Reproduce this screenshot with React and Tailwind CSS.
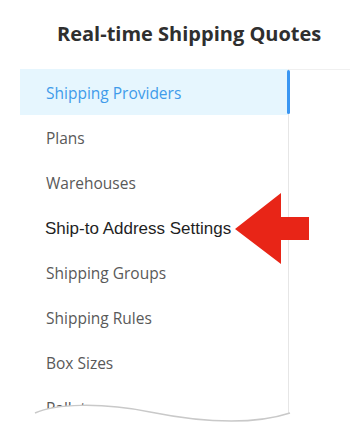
const items = [
  "Shipping Providers",
  "Plans",
  "Warehouses",
  "Ship-to Address Settings",
  "Shipping Groups",
  "Shipping Rules",
  "Box Sizes",
  "Pallets",
];

export default function App() {
  return (
    <div className="relative w-[350px] h-[434px] overflow-hidden bg-white font-['Open_Sans',sans-serif]">
      <div className="h-[69px] flex items-center pl-[57px] pb-[1px]">
        <h1 className="text-[20px] font-bold text-[#2f2f2f]">
          Real-time Shipping Quotes
        </h1>
      </div>

      <div className="flex">
        <div className="w-[269px] ml-5 border-r border-[#e6e6e6] pb-10">
          {items.map((label, i) => {
            if (i === 0) {
              return (
                <div
                  key={label}
                  className="relative h-[46px] flex items-center pl-[26px] pt-[3px] bg-[#e6f6fe] text-[15.5px] text-[#3f9bea]"
                >
                  {label}
                  <span className="absolute -right-[2px] top-px bottom-px w-[3px] rounded-sm bg-[#3a96f2]"></span>
                </div>
              );
            }
            if (label === "Ship-to Address Settings") {
              return (
                <div
                  key={label}
                  className="h-[45px] flex items-center pl-[25px] pt-[2px] text-[17px] text-[#1f1f1f] font-['Liberation_Sans',Arial,sans-serif]"
                >
                  {label}
                </div>
              );
            }
            return (
              <div
                key={label}
                className="h-[45px] flex items-center pl-[26px] pt-[2px] text-[15.5px] text-[#595959]"
              >
                {label}
              </div>
            );
          })}
        </div>
        <div className="flex-1 border-t border-[#f0f0f0]"></div>
      </div>

      <svg
        className="absolute left-[235px] top-[192px]"
        width="75"
        height="73"
        viewBox="0 0 75 73"
      >
        <polygon
          points="0,37 46,1 46,25 74,25 74,48 46,48 46,72"
          fill="#e82517"
        />
      </svg>

      <svg
        className="absolute left-0 top-0"
        width="350"
        height="434"
        viewBox="0 0 350 434"
      >
        <path
          d="M0 434 L0 413 L35 413 C55 404 100 402 150 412 S250 426 290 413 L350 413 L350 434 Z"
          fill="#ffffff"
        />
        <path
          d="M35 413 C55 404 100 402 150 412 S250 426 290 413"
          fill="none"
          stroke="#c9c9c9"
          strokeWidth="1.5"
        />
      </svg>
    </div>
  );
}
